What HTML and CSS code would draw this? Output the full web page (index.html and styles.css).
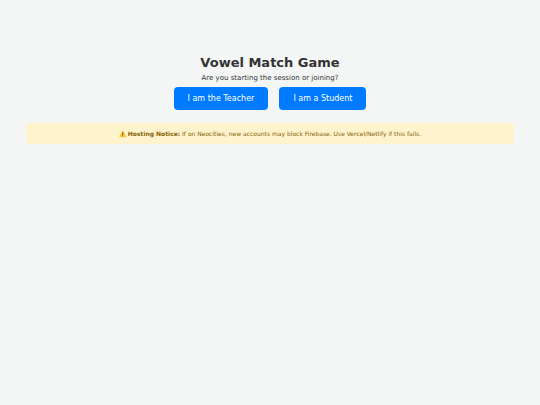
FILE: index.html
```html
<!DOCTYPE html>
<html lang="en">
<head>
    <meta charset="UTF-8">
    <meta name="viewport" content="width=device-width, initial-scale=1.0">
    <title>Vowel Match Game</title>
    <link rel="stylesheet" href="styles.css">
</head>
<body>
    <div class="setup">
        <h1>Vowel Match Game</h1>
        <p>Are you starting the session or joining?</p>
        <div class="roles">
            <button type="button">I am the Teacher</button>
            <button type="button">I am a Student</button>
        </div>
        <div class="notice">
            ⚠️ <strong>Hosting Notice:</strong> If on Neocities, new accounts may block Firebase. Use Vercel/Netlify if this fails.
        </div>
    </div>
</body>
</html>
```

FILE: styles.css
```css
body {
    margin: 0;
    padding: 54px 26px 0;
    font-family: "DejaVu Sans", Verdana, sans-serif;
    text-align: center;
    background-color: #f4f6f5;
    color: #333;
}
h1 {
    margin: 0;
    font-size: 13px;
    line-height: 17px;
}
p {
    margin: 2px 0 4px;
    font-size: 7px;
    line-height: 10px;
}
.roles {
    display: flex;
    justify-content: center;
    gap: 11px;
}
button {
    padding: 6px 14px;
    font-family: inherit;
    font-size: 8px;
    line-height: 11px;
    background: #007bff;
    color: white;
    border: none;
    border-radius: 4px;
    cursor: pointer;
}
.notice {
    margin-top: 13px;
    padding: 6px;
    font-size: 6px;
    line-height: 9px;
    background: #fff3cd;
    color: #856404;
    border-radius: 3px;
}
```
